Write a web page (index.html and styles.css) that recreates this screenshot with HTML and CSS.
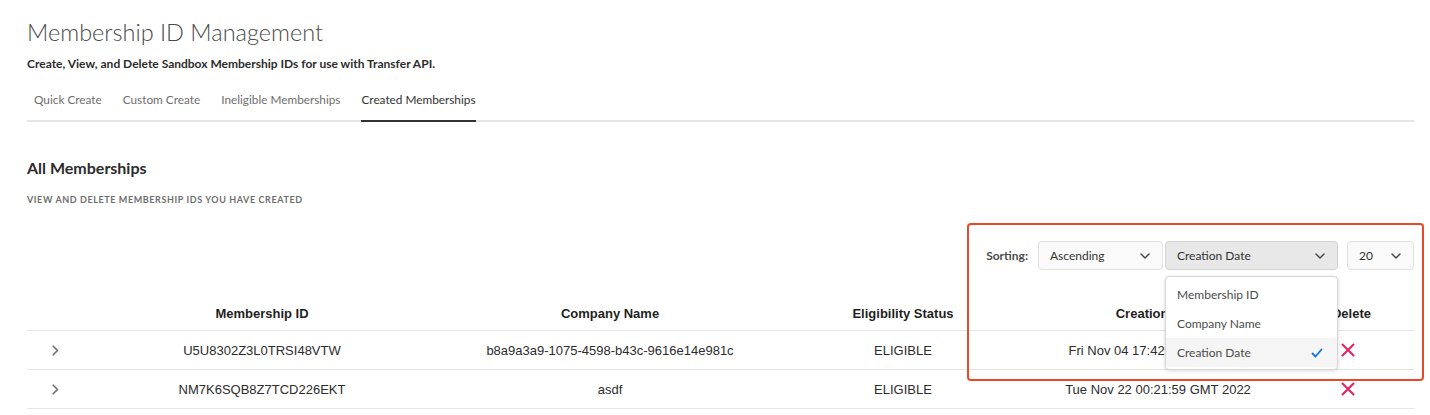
FILE: index.html
```html
<!DOCTYPE html>
<html lang="en">
<head>
<meta charset="utf-8">
<title>Membership ID Management</title>
<link rel="stylesheet" href="styles.css">
</head>
<body>
<div class="page">
  <h1 class="title">Membership ID Management</h1>
  <p class="subtitle">Create, View, and Delete Sandbox Membership IDs for use with Transfer API.</p>
  <nav class="tabs">
    <span class="tab">Quick Create</span>
    <span class="tab">Custom Create</span>
    <span class="tab">Ineligible Memberships</span>
    <span class="tab active">Created Memberships</span>
  </nav>

  <h2 class="section-title">All Memberships</h2>
  <p class="caption">VIEW AND DELETE MEMBERSHIP IDS YOU HAVE CREATED</p>

  <div class="toolbar">
    <span class="toolbar-label">Sorting:</span>
    <div class="select sel-order">
      <span>Ascending</span>
      <svg class="chev" viewBox="0 0 10 6" width="10" height="6"><path d="M1 1 L5 5 L9 1" fill="none" stroke="#4b4b4b" stroke-width="1.5" stroke-linecap="round" stroke-linejoin="round"/></svg>
    </div>
    <div class="select-wrap">
      <div class="select sel-field open">
        <span>Creation Date</span>
        <svg class="chev" viewBox="0 0 10 6" width="10" height="6"><path d="M1 1 L5 5 L9 1" fill="none" stroke="#4b4b4b" stroke-width="1.5" stroke-linecap="round" stroke-linejoin="round"/></svg>
      </div>
      <ul class="menu">
        <li class="menu-item">Membership ID</li>
        <li class="menu-item">Company Name</li>
        <li class="menu-item selected">Creation Date
          <svg class="check" viewBox="0 0 12 10" width="12" height="10"><path d="M1.5 5.5 L4.5 8.5 L10.5 1.5" fill="none" stroke="#1473e6" stroke-width="1.8" stroke-linecap="round" stroke-linejoin="round"/></svg>
        </li>
      </ul>
    </div>
    <div class="select sel-size">
      <span>20</span>
      <svg class="chev" viewBox="0 0 10 6" width="10" height="6"><path d="M1 1 L5 5 L9 1" fill="none" stroke="#4b4b4b" stroke-width="1.5" stroke-linecap="round" stroke-linejoin="round"/></svg>
    </div>
  </div>

  <div class="table">
    <div class="row head">
      <div class="cell"></div>
      <div class="cell">Membership ID</div>
      <div class="cell">Company Name</div>
      <div class="cell">Eligibility Status</div>
      <div class="cell">Creation Date</div>
      <div class="cell">Delete</div>
    </div>
    <div class="row">
      <div class="cell"><svg class="expand" viewBox="0 0 7 11" width="7" height="11"><path d="M1.2 1.2 L5.5 5.5 L1.2 9.8" fill="none" stroke="#6e6e6e" stroke-width="1.6" stroke-linecap="round" stroke-linejoin="round"/></svg></div>
      <div class="cell">U5U8302Z3L0TRSI48VTW</div>
      <div class="cell">b8a9a3a9-1075-4598-b43c-9616e14e981c</div>
      <div class="cell">ELIGIBLE</div>
      <div class="cell">Fri Nov 04 17:42:10 GMT 2022</div>
      <div class="cell del"><svg viewBox="0 0 14 14" width="14" height="14"><path d="M1.5 1.5 L12.5 12.5 M12.5 1.5 L1.5 12.5" fill="none" stroke="#ea1e5c" stroke-width="2" stroke-linecap="round"/></svg></div>
    </div>
    <div class="row">
      <div class="cell"><svg class="expand" viewBox="0 0 7 11" width="7" height="11"><path d="M1.2 1.2 L5.5 5.5 L1.2 9.8" fill="none" stroke="#6e6e6e" stroke-width="1.6" stroke-linecap="round" stroke-linejoin="round"/></svg></div>
      <div class="cell">NM7K6SQB8Z7TCD226EKT</div>
      <div class="cell">asdf</div>
      <div class="cell">ELIGIBLE</div>
      <div class="cell">Tue Nov 22 00:21:59 GMT 2022</div>
      <div class="cell del"><svg viewBox="0 0 14 14" width="14" height="14"><path d="M1.5 1.5 L12.5 12.5 M12.5 1.5 L1.5 12.5" fill="none" stroke="#ea1e5c" stroke-width="2" stroke-linecap="round"/></svg></div>
    </div>
  </div>

  <div class="highlight"></div>
</div>
</body>
</html>
```

FILE: styles.css
```css
* { box-sizing: border-box; }

html, body {
  margin: 0;
  padding: 0;
  background: #ffffff;
}

body {
  font-family: "Lato", "Open Sans", sans-serif;
  color: #323232;
  width: 1430px;
  height: 415px;
  overflow: hidden;
}

.page {
  position: relative;
  padding: 0 16px 0 27px;
}

.title {
  margin: 0;
  padding-top: 16px;
  font-size: 23.5px;
  line-height: 32px;
  font-weight: 300;
  color: #4b4b4b;
}

.subtitle {
  margin: 8px 0 0 0;
  font-size: 12px;
  line-height: 16px;
  font-weight: 700;
  color: #2c2c2c;
}

.tabs {
  display: flex;
  gap: 21px;
  margin-top: 7px;
  padding-left: 7px;
  border-bottom: 2px solid #e6e6e6;
  height: 43px;
}

.tab {
  font-size: 11.8px;
  line-height: 16px;
  padding-top: 13px;
  color: #6e6e6e;
  height: 43px;
}

.tab.active {
  color: #323232;
  border-bottom: 2px solid #323232;
}

.section-title {
  margin: 36px 0 0 0;
  font-size: 16px;
  line-height: 20px;
  font-weight: 700;
  color: #2c2c2c;
}

.caption {
  margin: 16px 0 0 0;
  font-size: 9px;
  line-height: 12px;
  font-weight: 700;
  letter-spacing: 0.6px;
  color: #6e6e6e;
}

.toolbar {
  display: flex;
  justify-content: flex-end;
  align-items: center;
  margin-top: 35px;
  height: 29px;
}

.toolbar-label {
  font-size: 12px;
  font-weight: 700;
  color: #4b4b4b;
  margin-right: 10px;
}

.select {
  display: flex;
  align-items: center;
  justify-content: space-between;
  height: 29px;
  padding: 0 12px 0 11px;
  border: 1px solid #e1e1e1;
  border-radius: 4px;
  background: #fafafa;
  font-size: 12px;
  color: #323232;
}

.sel-order { width: 125px; margin-right: 2px; }
.sel-field { width: 173px; }
.sel-size { width: 67px; margin-left: 9px; }

.sel-field.open {
  background: #e8e8e8;
  border-color: #d3d3d3;
}

.select-wrap {
  position: relative;
}

.menu {
  position: absolute;
  top: 35px;
  left: 0;
  width: 173px;
  margin: 0;
  padding: 3px 0 2px 0;
  list-style: none;
  background: #ffffff;
  border: 1px solid #d6d6d6;
  border-radius: 4px;
  box-shadow: 0 1px 4px rgba(0, 0, 0, 0.15);
  z-index: 5;
}

.menu-item {
  display: flex;
  align-items: center;
  justify-content: space-between;
  height: 29px;
  padding: 0 14px 0 11px;
  font-size: 12px;
  color: #4b4b4b;
}

.menu-item.selected {
  background: #f5f5f5;
}

.table {
  margin-top: 26px;
  font-family: "Liberation Sans", Arial, sans-serif;
  font-size: 13px;
  color: #2c2c2c;
}

.row {
  display: grid;
  grid-template-columns: 56px 358px 338px 248px 262px 125px;
  height: 39px;
  border-bottom: 1px solid #e4e4e4;
  align-items: center;
}

.row.head {
  height: 35px;
  font-weight: 700;
  color: #1f1f1f;
}

.cell {
  text-align: center;
  display: flex;
  align-items: center;
  justify-content: center;
}

.del { padding-right: 8px; }

.highlight {
  position: absolute;
  left: 967px;
  top: 223px;
  width: 457px;
  height: 158px;
  border: 2px solid #ee4626;
  border-radius: 4px;
  pointer-events: none;
  z-index: 10;
}
```
